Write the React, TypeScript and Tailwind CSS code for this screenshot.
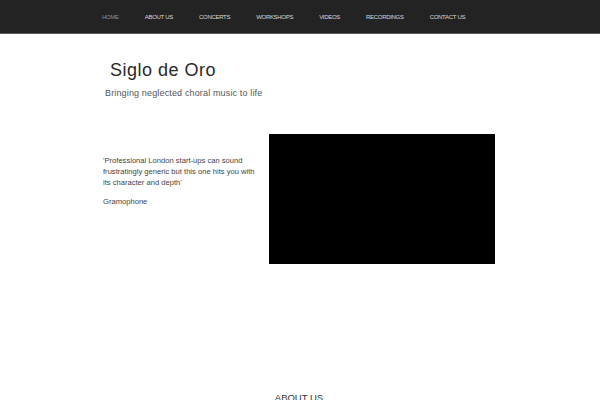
import React from 'react';

const NAV = ['HOME', 'ABOUT US', 'CONCERTS', 'WORKSHOPS', 'VIDEOS', 'RECORDINGS', 'CONTACT US'];

const App: React.FC = () => {
    return (
        <div className="w-[600px] h-[400px] overflow-hidden bg-white" style={{ fontFamily: '"Liberation Sans", Arial, sans-serif' }}>
            <header className="h-[34px] bg-[#232323] border-b border-[#5c5c5c] flex items-center pl-[102px] gap-[26px]">
                {NAV.map((item, i) => (
                    <span
                        key={item}
                        className={`text-[6px] leading-none tracking-[-0.3px] ${i === 0 ? 'text-[#8f8f8f]' : 'text-[#d9d9d9]'}`}
                    >
                        {item}
                    </span>
                ))}
            </header>

            <div className="pl-[110px] pt-[24px]">
                <h1 className="text-[18px] leading-[24px] tracking-[0.5px] text-[#2a2a2a]">Siglo de Oro</h1>
            </div>
            <p className="pl-[105px] pt-[5px] text-[9px] leading-[12px] tracking-[0.15px] text-[#555]">
                Bringing neglected choral music to life
            </p>

            <div className="flex pl-[103px] pt-[35px]">
                <div className="w-[166px] pt-[21px] text-[7.6px] leading-[11px] text-[#444]">
                    <p className="w-[158px]">
                        'Professional London start-ups can sound frustratingly generic but this one hits you with its character and depth'
                    </p>
                    <p className="mt-[8px]">Gramophone</p>
                </div>
                <div className="w-[226px] h-[130px] bg-black" />
            </div>

            <div className="pt-[120px] text-center">
                <h2 className="inline-block text-[9.5px] leading-[14px] text-[#333] pr-[2px]">ABOUT US</h2>
            </div>
        </div>
    );
};

export default App;
